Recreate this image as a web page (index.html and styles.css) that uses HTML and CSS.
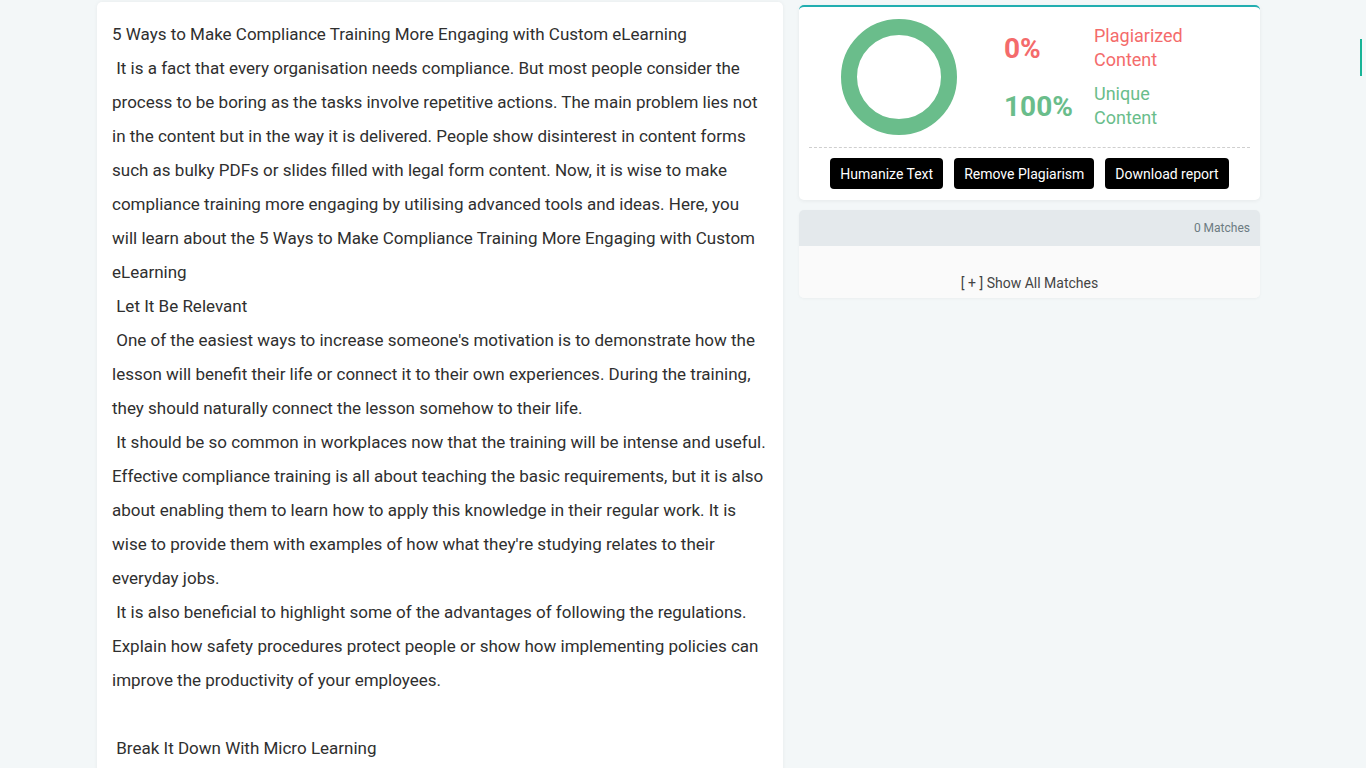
FILE: index.html
```html
<!DOCTYPE html>
<html lang="en">
<head>
<meta charset="utf-8">
<title>Plagiarism Report</title>
<link rel="stylesheet" href="styles.css">
</head>
<body>
<div class="page">
  <div class="text-card">
    <div class="text-body">5 Ways to Make Compliance Training More Engaging with Custom eLearning
 It is a fact that every organisation needs compliance. But most people consider the process to be boring as the tasks involve repetitive actions. The main problem lies not in the content but in the way it is delivered. People show disinterest in content forms such as bulky PDFs or slides filled with legal form content. Now, it is wise to make compliance training more engaging by utilising advanced tools and ideas. Here, you will learn about the 5 Ways to Make Compliance Training More Engaging with Custom eLearning
 Let It Be Relevant
 One of the easiest ways to increase someone's motivation is to demonstrate how the lesson will benefit their life or connect it to their own experiences. During the training, they should naturally connect the lesson somehow to their life.
 It should be so common in workplaces now that the training will be intense and useful. Effective compliance training is all about teaching the basic requirements, but it is also about enabling them to learn how to apply this knowledge in their regular work. It is wise to provide them with examples of how what they're studying relates to their everyday jobs.
 It is also beneficial to highlight some of the advantages of following the regulations. Explain how safety procedures protect people or show how implementing policies can improve the productivity of your employees.

 Break It Down With Micro Learning</div>
  </div>
  <div class="side">
    <div class="result-card">
      <div class="summary">
        <svg class="donut" width="116" height="116" viewBox="0 0 116 116">
          <circle cx="58" cy="58" r="50" fill="none" stroke="#6abd8b" stroke-width="16"/>
        </svg>
        <div class="stats">
          <div class="pct red">0%</div>
          <div class="label red">Plagiarized<br>Content</div>
          <div class="pct green">100%</div>
          <div class="label green">Unique<br>Content</div>
        </div>
      </div>
      <div class="actions">
        <button class="btn">Humanize Text</button>
        <button class="btn">Remove Plagiarism</button>
        <button class="btn">Download report</button>
      </div>
    </div>
    <div class="matches-card">
      <div class="matches-head">0 Matches</div>
      <div class="matches-body">[ + ] Show All Matches</div>
    </div>
  </div>
</div>
<div class="scroll-mark"></div>
</body>
</html>
```
FILE: styles.css
```css
html, body {
  margin: 0;
  padding: 0;
  background: #f3f7f8;
  font-family: Roboto, "Liberation Sans", Arial, sans-serif;
  color: #333;
  height: 768px;
  overflow: hidden;
}

.page {
  display: flex;
  align-items: flex-start;
  gap: 16px;
  padding-left: 97px;
}

.text-card {
  width: 686px;
  margin-top: 2px;
  background: #fff;
  border-radius: 5px;
  box-shadow: 0 0 4px rgba(0, 0, 0, 0.05);
  padding: 15px 15px 20px 15px;
  box-sizing: border-box;
}

.text-body {
  white-space: pre-wrap;
  font-size: 17px;
  line-height: 34px;
  color: #2f2f2f;
}

.side {
  width: 461px;
  margin-top: 5px;
  display: flex;
  flex-direction: column;
  gap: 10px;
}

.result-card {
  background: #fff;
  border-top: 2px solid #22aeb0;
  border-radius: 5px;
  box-shadow: 0 1px 4px rgba(0, 0, 0, 0.06);
  padding: 0 10px 11px;
}

.summary {
  display: flex;
  align-items: center;
  padding: 12px 0 12px;
  border-bottom: 1px dashed #cfcfcf;
}

.donut {
  display: block;
  margin-left: 32px;
}

.stats {
  margin-left: 47px;
  display: grid;
  grid-template-columns: 90px auto;
  row-gap: 10px;
  align-items: center;
}

.pct {
  font-size: 28px;
  font-weight: 700;
}

.label {
  font-size: 18px;
  line-height: 24px;
}

.red { color: #f46b6b; }
.green { color: #6abd8b; }

.actions {
  display: flex;
  justify-content: center;
  gap: 11px;
  margin-top: 10px;
}

.btn {
  background: #000;
  color: #fff;
  border: none;
  border-radius: 4px;
  height: 31px;
  padding: 0 10px;
  font-family: Roboto, "Liberation Sans", Arial, sans-serif;
  font-size: 14px;
  cursor: pointer;
}

.matches-card {
  border-radius: 5px;
  overflow: hidden;
  box-shadow: 0 1px 3px rgba(0, 0, 0, 0.04);
}

.matches-head {
  background: #e4e9ec;
  height: 36px;
  line-height: 36px;
  text-align: right;
  padding-right: 10px;
  font-size: 12px;
  color: #6c7b82;
}

.matches-body {
  background: #fafafa;
  text-align: center;
  padding: 27px 0 5px;
  line-height: 20px;
  font-size: 14px;
  color: #444;
}

.scroll-mark {
  position: absolute;
  left: 1360px;
  top: 39px;
  width: 2px;
  height: 37px;
  background: #17b497;
}
```
